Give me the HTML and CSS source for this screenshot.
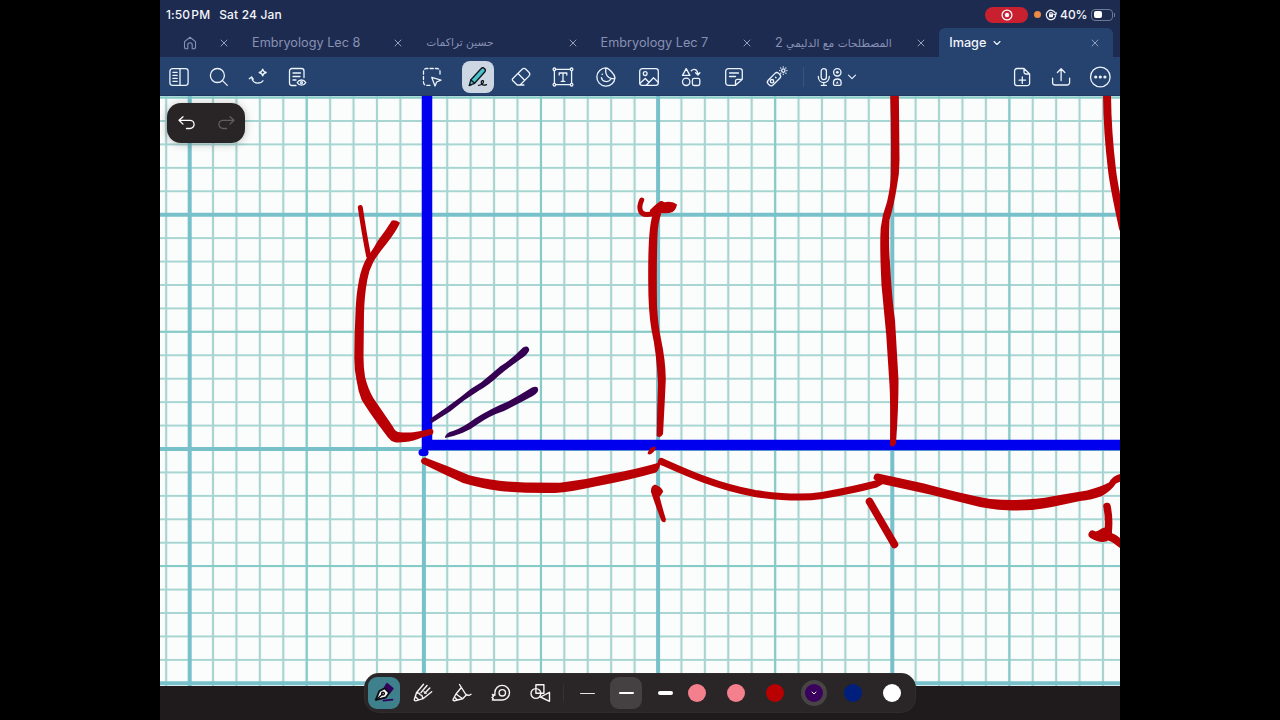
FILE: index.html
```html
<!DOCTYPE html>
<html lang="en">
<head>
    <meta charset="UTF-8">
    <title>Image</title>
    <link rel="stylesheet" href="styles.css">
</head>
<body>

<div class="screen">
    <div class="status">
        <span class="time">1:50<small> </small>PM</span>
        <span class="date">Sat 24 Jan</span>
        <span class="rec">
            <svg width="12" height="12" viewBox="0 0 12 12"><circle cx="6" cy="6" r="4.9"/><circle class="solid" cx="6" cy="6" r="2.2"/></svg>
        </span>
        <span class="mic-dot"></span>
        <svg class="lock" width="12" height="12" viewBox="0 0 12 12"><path d="M10.200 3.800A4.700 4.700 0 1 0 10.500 7.300M11.300 3.900l-.6 2.200-2-.9"/><path d="M4.700 5.600v-.8a1.300 1.300 0 0 1 2.600 0v.8"/><rect class="solid" x="4" y="5.300" width="4" height="2.900" rx=".4"/></svg>
        <span class="percent">40%</span>
        <span class="battery"><i></i></span>
    </div>

    <div class="tabs">
        <div class="home">
            <svg width="14" height="14" viewBox="0 0 14 14"><path d="M1.500 5.600 7 1.200l5.500 4.400v5.600a1.500 1.500 0 0 1-1.500 1.500H9.200V8.900a2.200 2.200 0 0 0-4.400 0v3.800H3a1.500 1.500 0 0 1-1.500-1.500z"/></svg>
            <svg class="close" width="8" height="8" viewBox="0 0 8 8"><path d="M1 1l6 6M7 1 1 7"/></svg>
        </div>
        <div class="tab">
            <span>Embryology Lec 8</span>
            <svg class="close" width="8" height="8" viewBox="0 0 8 8"><path d="M1 1l6 6M7 1 1 7"/></svg>
        </div>
        <div class="tab">
            <span class="arabic" dir="rtl" lang="ar">حسين تراكمات</span>
            <svg class="close" width="8" height="8" viewBox="0 0 8 8"><path d="M1 1l6 6M7 1 1 7"/></svg>
        </div>
        <div class="tab">
            <span>Embryology Lec 7</span>
            <svg class="close" width="8" height="8" viewBox="0 0 8 8"><path d="M1 1l6 6M7 1 1 7"/></svg>
        </div>
        <div class="tab">
            <span class="arabic" dir="rtl" lang="ar">المصطلحات مع الدليمي <b>2</b></span>
            <svg class="close" width="8" height="8" viewBox="0 0 8 8"><path d="M1 1l6 6M7 1 1 7"/></svg>
        </div>
        <div class="tab active">
            <span>Image</span>
            <svg class="down" width="8" height="6" viewBox="0 0 8 6"><path d="M1 1.500l3 3 3-3"/></svg>
            <svg class="close" width="8" height="8" viewBox="0 0 8 8"><path d="M1 1l6 6M7 1 1 7"/></svg>
        </div>
    </div>

    <div class="toolbar">
        <div class="group left">
            <svg viewBox="0 0 24 24"><rect x="2.900" y="3.700" width="18.200" height="16.600" rx="2.500"/><path d="M13 3.700v16.600M5.900 7.300h4.300M5.900 10.300h4.300M5.900 13.300h4.300M5.900 16.300h4.300"/></svg>
            <svg viewBox="0 0 24 24"><circle cx="10.400" cy="10.500" r="7"/><path d="M15.500 15.600l4.800 4.800"/></svg>
            <svg viewBox="0 0 24 24"><path d="M3.300 13.700l2.300-1.800 1.600 2.300M5.600 12c.8 4.400 3.800 6.300 6.800 6 2.100-.1 3.600-1 4.500-2.200"/><path d="M16.700 4.100c.4 2 1.200 2.900 3.500 3.400-2.300.5-3.100 1.400-3.500 3.400-.4-2-1.200-2.900-3.500-3.400 2.300-.5 3.100-1.400 3.500-3.400z"/></svg>
            <svg viewBox="0 0 24 24"><path d="M11 20.500H7a2.500 2.500 0 0 1-2.500-2.500V6A2.500 2.500 0 0 1 7 3.500h9.500A2.500 2.500 0 0 1 19 6v6.500M8 8h7.500M8 11.500h7M8 15h3"/><path d="M12.200 17.600c2.200-3.500 6.400-3.500 8.600 0-2.200 3.400-6.400 3.400-8.600 0z"/><circle cx="16.500" cy="17.600" r="1"/></svg>
        </div>

        <div class="group tools">
            <div class="cell select">
                <svg viewBox="0 0 24 24"><path stroke-dasharray="3.300 2.100" d="M10 20.300H6.500a3 3 0 0 1-3-3V6.500a3 3 0 0 1 3-3H17a3 3 0 0 1 3 3V11"/><path d="M11.800 12.400l9.200 2.700-4.300 1.900-1.700 4z"/></svg>
            </div>
            <div class="cell">
                <div class="pill">
                    <svg viewBox="0 0 24 24"><path class="teal" d="M3.300 20.500l1.600-5.800L15 3.800a2.400 2.400 0 0 1 3.700 3.200L8.600 18.300z"/><path d="M4.900 14.900l3.500 3.200M3.300 20.500l2-.8"/><path d="M12.500 20.300c2.800 0 5.300-2.200 5-4-.3-1.300-2.200-.7-2.300 1-.1 2.600 2.600 3.500 5.300 2.400"/></svg>
                </div>
            </div>
            <div class="cell">
                <svg viewBox="0 0 24 24"><path d="M3.600 13.700l9.500-9.400a2.700 2.700 0 0 1 3.800 0l3 3a2.700 2.700 0 0 1 0 3.800l-8.800 8.900H8.200l-4.600-4.500a1.500 1.500 0 0 1 0-1.800zM9 8.500l6.700 6.700M8.500 20h6.400"/></svg>
            </div>
            <div class="cell">
                <svg viewBox="0 0 24 24"><rect x="3.400" y="4.300" width="17.200" height="15.400"/><g class="knob"><circle cx="3.400" cy="4.300" r="1.300"/><circle cx="20.600" cy="4.300" r="1.300"/><circle cx="3.400" cy="19.700" r="1.300"/><circle cx="20.600" cy="19.700" r="1.300"/></g><path d="M8.200 10V8h7.600v2M12 8v8.300M10.200 16.300h3.600"/></svg>
            </div>
            <div class="cell">
                <svg viewBox="0 0 24 24"><path d="M12 2.900a9.100 9.100 0 1 0 9 10c-1.600 1.500-6 .5-7.800-2-1.800-2.400-1.700-5.800-1.200-8zM12 2.900c2.500.3 8.700 6 9 10"/><path d="M7.400 12.700c.6 4 6.500 5.400 9.300 1.700"/><circle class="solid" cx="8.300" cy="9.300" r=".8"/></svg>
            </div>
            <div class="cell">
                <svg viewBox="0 0 24 24"><rect x="2.700" y="3.700" width="18.600" height="16.600" rx="2.600"/><circle cx="8.200" cy="8.600" r="1.900"/><path d="M3 18.300l5.300-4.800 3.600 3.700M9.500 20l7-7.300 4.700 4.500"/></svg>
            </div>
            <div class="cell">
                <svg viewBox="0 0 24 24"><path d="M7.200 3.600l3.700 6.800H3.500z"/><circle cx="7.200" cy="16.800" r="3.700"/><rect x="13.400" y="13.300" width="7.400" height="7.200" rx="1.800"/><path d="M12.300 5.700c2.300-2.400 6.400-1.500 6.600 3.800M16.600 7.800l2.300 2.200 2-2.300"/></svg>
            </div>
            <div class="cell">
                <svg viewBox="0 0 24 24"><path d="M13.500 20.300H6.300a2.600 2.600 0 0 1-2.600-2.600V6.300a2.600 2.600 0 0 1 2.600-2.600h11.400a2.600 2.600 0 0 1 2.600 2.600v8zM20.300 14.300h-4.600a2 2 0 0 0-2.200 2v4M20.300 14.300l-6.800 6M7.500 8h9M7.500 11.500h6"/></svg>
            </div>
            <div class="cell">
                <svg viewBox="0 0 24 24"><rect x="1.600" y="10.800" width="14.800" height="6.800" rx="2.600" transform="rotate(-45 9 14.200)"/><circle cx="7" cy="16.200" r="1.700"/><path d="M10.500 12.200l.5.500"/><circle cx="18.300" cy="5.600" r="1.700"/><path d="M18.300 1.900v.2M18.300 9.100v.2M14.600 5.600h.2M21.800 5.600h.2M15.700 3l.1.100M20.800 8.100l.1.100M15.700 8.200l.1-.1M20.800 3.100l.1-.1"/></svg>
            </div>
            <span class="line"></span>
            <svg class="record" viewBox="0 0 28 24"><rect x="6.200" y="3.700" width="5.200" height="11" rx="2.600"/><path d="M3.300 11.500c0 8.200 11 8.200 11 0M8.800 17.700v2.600M6.300 20.400h5"/><circle cx="22.300" cy="7.300" r="3.700"/><circle class="solid" cx="22.300" cy="7.300" r="1.400"/><path d="M18.500 19v-1.500c0-4.700 7.600-4.700 7.600 0V19c0 1-.6 1.400-1.500 1.400H20c-.9 0-1.500-.4-1.500-1.400z"/><path class="solid" d="M21 18.600l1.300-2.600 1.300 2.600z"/></svg>
            <svg class="down" width="10" height="6" viewBox="0 0 10 6"><path d="M1.500 1.200l3.500 3.500 3.500-3.500"/></svg>
        </div>

        <div class="group right">
            <svg viewBox="0 0 24 24"><path d="M14 3.500H7a2.400 2.400 0 0 0-2.400 2.400v12.300A2.400 2.400 0 0 0 7 20.600h10.200a2.400 2.400 0 0 0 2.400-2.400V9zM14 3.500v3.700A1.800 1.800 0 0 0 15.800 9h3.800M12.300 12v6.400M9.100 15.200h6.400"/></svg>
            <svg viewBox="0 0 24 24"><path d="M3.600 13.200v4.300A2.500 2.500 0 0 0 6.100 20h12a2.500 2.500 0 0 0 2.500-2.500v-4.300M12.100 15.500V4M8.400 7.500l3.700-3.700 3.700 3.700"/></svg>
            <svg viewBox="0 0 24 24"><circle cx="12.300" cy="12" r="9.800"/><g class="solid"><circle cx="7.700" cy="12" r="1.600"/><circle cx="12.300" cy="12" r="1.600"/><circle cx="16.900" cy="12" r="1.600"/></g></svg>
        </div>
    </div>

    <div class="board">
        <svg class="paper" width="960" height="590" viewBox="160 96 960 590">
            <defs>
                <pattern id="small" x="189.600" y="214.700" width="23.420" height="23.430" patternUnits="userSpaceOnUse">
                    <path class="col" d="M0 0v23.430M23.420 0v23.430"/>
                    <path class="row" d="M0 0h23.420M0 23.430h23.420"/>
                </pattern>
            </defs>
            <rect class="sheet" x="160" y="96" width="960" height="590"/>
            <rect fill="url(#small)" x="160" y="96" width="960" height="590"/>
            <path class="mid" d="M306.700 96v590M541 96v590M775.200 96v590M1009.400 96v590M160 97.600h960M160 331.800h960M160 566h960"/>
            <path class="major" d="M189.700 96v590M423.900 96v590M658.100 96v590M892.300 96v590M160 214.700h960M160 449h960M160 683.300h960"/>

            <g class="ink blue">
                <path stroke-width="10.500" stroke-linecap="butt" d="M427 90v359M422 445h700"/>
                <path stroke-width="7" d="M422 452.500h3"/>
            </g>

            <g class="ink red">
                <path stroke-width="5" d="M360.300 207.500C362 219 365 238 368.600 256"/>
                <path class="fill" d="M391.700 220.700Q395 219.500 400 222.700Q397 230 386.700 243.500Q378 254 373.300 262Q369 270 367.300 280Q364.500 295 364 313L363.500 356.700Q363.500 368 365 376.700Q368 389 373.300 398L393 426.700Q395 431.200 398 431.900Q405 433 413.300 432.300Q423 431 430.500 428.800Q435 429.500 432.500 434.500L423 437Q413 441.500 405 442Q399 442.800 395 442.300Q391 441.500 388 437.500L380 426.700Q369 412 361.700 400Q358 391 356.500 380Q354.300 370 354.300 358Q354.300 335 355.500 313Q356 295 359 280Q361.500 267 366.700 258Q374 248 378 240.500Q386 230 391.700 220.700z"/>

                <path stroke-width="5" d="M641.700 200c-3.500 8-2 14.500 5 14.500 8 0 12-3 15-11"/>
                <path class="fill" d="M650 210Q658 202 661 201Q663 203 666 202Q673 201 677 204.500Q676 210 672.500 212Q668 214 661 213Q655 217 650 216z"/>
                <path class="fill" d="M653 214L661.500 213Q658 222 657.500 235Q656.500 262 657 305Q658 325 661 339Q665.500 360 665.800 379Q665 398 663 434Q660.500 439 656.700 436Q657 410 658 384Q656.500 352 651.500 330Q648 310 648.200 276Q648 226 653 214z"/>
                <path class="fill" d="M647.500 453.500Q649 448 654 446.500Q657.500 447 653.500 452Q650 456 647.500 453.500z"/>

                <path class="fill" d="M890 90H898.800L899.500 160Q899.500 174 897 186Q894 205 889.500 220Q888.500 245 889.800 260Q892 300 895 320L898.500 380Q898.500 410 896 443Q893.500 449 890 445Q890.500 400 889.500 385Q887 335 881.500 285Q879.500 245 880.700 228Q882 215 887 202Q891 185 890.800 172Q891.500 130 890 90z"/>
                <path stroke-width="8" d="M1107 90C1107 120 1109 145 1112 170C1114 187 1118 205 1123 228"/>

                <path class="fill" d="M422 463.500Q419 459 425 457.500Q448 466 470 475.500Q495 481.500 525 482.500L560 482.700Q585 480 610 474Q635 469.500 656 463.500L660 461Q661 468 656 472.500Q630 480 595 486.500Q570 492 555 493Q525 493.500 500 491Q480 488 463 483Q441 473 422 463.500z"/>
                <path stroke-width="7" d="M661.500 461.500C685 472 715 486 755 493.500C779 497 803 498.500 822 495.500C842 492 859 488.500 876 484l7-4"/>
                <path class="fill" d="M873.500 479Q873.500 473 878 473.500L924 483.500Q960 493.500 990 499Q1025 502 1054 496L1087 490.500Q1103 486 1109 482.500Q1113 475 1122 473.500V481L1116 483.500Q1111 491 1102 496Q1092 500 1080 501L1052 507Q1033 511 1012 510.500Q995 510 980 507L930 494.500L882 484z"/>

                <path class="fill" d="M651 492Q650.500 486 655 484.500Q662 487 663.200 491.500Q661 495.500 659.500 496.500Q663 510 666 519.500Q665.500 524 661.500 521Q657 510 651 492z"/>
                <path stroke-width="7.500" d="M869.500 501.500L894.500 544.500"/>
                <path stroke-width="7.500" d="M1107 506.500C1109 516 1109 525 1108 533"/>
                <path stroke-width="8" d="M1092.500 534.500C1100 539 1107 540 1108 533c-4-4-5 1-10 2M1106 536c6 0 10 4 18 10"/>
            </g>

            <g class="ink purple">
                <path class="fill" d="M431 423.500L430.500 418.500Q446 408 460 397.500Q470 388.500 481 382.500Q492 373.500 500 366.500Q512 359 523 347.500Q528.500 344.500 529.300 350Q528 354.500 520 359.500Q508 368 499 375.500Q489 385 479 390.500Q464 399.500 450 411.500z"/>
                <path class="fill" d="M445 438Q445.500 432.500 453 431Q463 427.500 475 418.500Q492 408 508 401.500Q520 395 532 387.500Q538 385 538.200 390Q538 394 528 398.500Q515 405.500 504 411Q490 415.500 478 424Q465 434 445 438z"/>
            </g>
        </svg>

        <div class="history">
            <svg width="20" height="16" viewBox="0 0 20 16"><path d="M6 1.700L2 5.300l4 3.800M2 5.300h11a4.100 4.100 0 0 1 0 8.200H9.500"/></svg>
            <svg class="off" width="20" height="16" viewBox="0 0 20 16"><path d="M14 1.700l4 3.600-4 3.800M18 5.300H7a4.100 4.100 0 0 0 0 8.200h3.500"/></svg>
        </div>

        <div class="pens">
            <div class="pen chosen">
                <svg viewBox="0 0 24 24"><path class="nib-top" d="M12.500 6.500l2.500-4 6 5-3.500 4.500z"/><path class="nib" d="M3.800 18.800l3.500-8.700 5.400-2.800 4.500 4.500-3.300 4.700z"/><path d="M4 18.700l6.500-5.500"/><circle cx="11" cy="12.600" r="1.400"/><path class="under" d="M11.500 19.600l9-1"/></svg>
            </div>
            <div class="pen">
                <svg viewBox="0 0 24 24"><path d="M12.500 3.300l-7 8.500L3.300 18.500q0 1.500 1.500 1.300L12 17.700l8.700-7M16 4.500l-6 7M13 10.800l2 1.500M18.800 7l-5 5.200M5.500 11.800l2.500.5 1.300 1.500 1.500.5L12 17.700M4.500 15.800l3 3"/></svg>
            </div>
            <div class="pen">
                <svg viewBox="0 0 24 24"><path d="M9.500 3.500L15.500 13q2.500 2.500 5.500.3M11.300 6.500L6 13l6.700 4.700 3.800-4M6 13l-3 5.500q0 1.300 1.300 1.200l8.400-2M4.300 16l3.200 3"/></svg>
            </div>
            <div class="pen">
                <svg viewBox="0 0 24 24"><path d="M3.400 19h10a7.300 7.300 0 1 0-7.500-7.300v2.600l-2.500-.8 1 2-1.400 1 1.200 1z"/><circle cx="13.300" cy="11.800" r="3.200"/></svg>
            </div>
            <div class="pen">
                <svg viewBox="0 0 24 24"><circle cx="7.900" cy="12.500" r="4.900"/><path d="M7.900 3.700h8v8.500h-8zM21.500 11.300v9L12.500 16z"/></svg>
            </div>
            <span class="line"></span>
            <div class="pen"><i class="thin"></i></div>
            <div class="pen width"><i class="medium"></i></div>
            <div class="pen"><i class="thick"></i></div>
            <div class="colors">
                <i class="pink"></i>
                <i class="pink"></i>
                <i class="crimson"></i>
                <i class="violet"><svg width="6" height="4" viewBox="0 0 6 4"><path d="M1 1l2 2 2-2"/></svg></i>
                <i class="navy"></i>
                <i class="white"></i>
            </div>
        </div>
    </div>
</div>

</body>
</html>
```
FILE: styles.css
```css
* {
    box-sizing: border-box;
}

body {
    margin: 0;
    background: #000;
    font-family: Inter, "Liberation Sans", sans-serif;
    display: flex;
    justify-content: center;
}

svg {
    display: block;
    flex: none;
    fill: none;
    stroke: currentColor;
    stroke-width: 1.3;
    stroke-linecap: round;
    stroke-linejoin: round;
}

.solid {
    fill: currentColor;
    stroke: none;
}

.screen {
    width: 960px;
    height: 720px;
    overflow: hidden;
    background: #1e2b50;
    display: flex;
    flex-direction: column;
}

/* status bar */
.status {
    height: 28px;
    padding: 1px 7px 0 6px;
    display: flex;
    align-items: center;
    color: #f3f5fa;
    font-size: 12px;
    font-weight: 500;
    white-space: nowrap;
}

.time {
    letter-spacing: 0.1px;
}

.time small {
    font-size: 4px;
}

.date {
    margin-left: 9px;
    letter-spacing: 0.15px;
}

.rec {
    width: 43px;
    height: 16px;
    margin-left: auto;
    border-radius: 8px;
    background: #c8202f;
    display: flex;
    align-items: center;
    justify-content: center;
}

.mic-dot {
    width: 7px;
    height: 7px;
    margin-left: 6px;
    border-radius: 50%;
    background: #ee8a43;
}

.lock {
    margin-left: 4px;
    stroke-width: 1.2;
}

.percent {
    width: 28px;
    margin-left: 3px;
}

.battery {
    position: relative;
    width: 22px;
    height: 12px;
    margin-left: 3px;
    padding: 1.5px;
    border: 1px solid #6f7894;
    border-radius: 4px;
}

.battery::after {
    content: "";
    position: absolute;
    right: -3px;
    top: 3px;
    width: 1px;
    height: 4px;
    background: #6f7894;
}

.battery i {
    display: block;
    width: 8px;
    height: 100%;
    border-radius: 2px;
    background: #fff;
}

/* tabs */
.tabs {
    height: 29px;
    display: flex;
    color: #8791b4;
    font-size: 12.7px;
}

.home {
    width: 82px;
    padding: 0 14px 0 23px;
    display: flex;
    align-items: center;
    justify-content: space-between;
}

.home svg {
    stroke-width: 1.1;
}

.tab {
    width: 174.300px;
    padding: 0 14px 0 10px;
    display: flex;
    align-items: center;
    white-space: nowrap;
}

.tabs .close {
    margin-left: auto;
    stroke-width: 1;
    color: #949dbc;
}

.arabic {
    font-family: "DejaVu Sans", sans-serif;
    font-size: 10.7px;
}

.arabic b {
    font-family: Inter, sans-serif;
    font-size: 12.7px;
    font-weight: 400;
}

.tab.active {
    color: #f1f4fa;
    font-weight: 500;
    background: #26426f;
    border-radius: 6px 6px 0 0;
}

.tab.active .down {
    margin-left: 7px;
    stroke-width: 1.1;
}

/* toolbar */
.toolbar {
    height: 39px;
    flex: none;
    padding-top: 1px;
    background: #26426f;
    border-bottom: 1px solid #20385f;
    color: #eaf3fb;
    display: flex;
    align-items: center;
}

.toolbar svg {
    width: 24px;
    height: 24px;
}

.group {
    display: flex;
    align-items: center;
}

.left {
    gap: 15.300px;
    padding-left: 7.300px;
}

.tools {
    margin-left: 101px;
}

.cell {
    width: 42.700px;
    display: flex;
    justify-content: center;
}

.select {
    margin-right: 3.800px;
}

.pill {
    width: 32px;
    height: 32px;
    border-radius: 8px;
    background: #cdd6e3;
    color: #10151c;
    display: flex;
    align-items: center;
    justify-content: center;
}

.teal {
    fill: #4cc0cb;
}

.knob {
    fill: #26426f;
}

.line {
    width: 1px;
    height: 20px;
    background: #3a527c;
}

.tools .line {
    margin-left: 5px;
}

.toolbar .record {
    width: 28px;
    margin-left: 11px;
}

.toolbar .down {
    width: 10px;
    height: 6px;
    margin-left: 4px;
    stroke-width: 1.1;
}

.right {
    margin-left: auto;
    gap: 15px;
    padding-right: 8px;
}

/* drawing area */
.board {
    position: relative;
    flex: 1;
    background: #1f1b1c;
}

.paper rect {
    stroke: none;
}

.sheet {
    fill: #fafdfc;
}

.col {
    stroke: #a9d3d0;
    stroke-width: 2.200;
}

.row {
    stroke: #a6d5d2;
    stroke-width: 1.900;
}

.mid {
    stroke: #86cbc8;
    stroke-width: 2;
}

.major {
    stroke: #78c1cb;
    stroke-width: 4;
}

.blue {
    stroke: #0000ee;
}

.red {
    stroke: #b90005;
}

.red .fill {
    fill: #b90005;
    stroke: none;
}

.purple .fill {
    fill: #360052;
    stroke: none;
}

.history {
    position: absolute;
    left: 7px;
    top: 7px;
    width: 78px;
    height: 40px;
    padding: 0 9px 0 10px;
    border-radius: 14px;
    background: #292425;
    box-shadow: 0 1px 8px rgba(0, 0, 0, 0.25);
    color: #fff;
    display: flex;
    align-items: center;
    justify-content: space-between;
}

.off {
    color: #625d5e;
}

.pens {
    position: absolute;
    left: 205px;
    top: 578px;
    width: 550px;
    height: 38px;
    border-radius: 14px;
    background: #2a2627;
    box-shadow: 0 0 0 1px #302c2d;
    color: #f5f3f3;
    display: flex;
    align-items: center;
}

.pen {
    width: 39px;
    height: 32px;
    display: flex;
    align-items: center;
    justify-content: center;
}

.pen svg {
    width: 24px;
    height: 24px;
    stroke-width: 1.4;
}

.chosen,
.width {
    width: 32px;
    height: 32px;
    margin: 0 3.500px;
    border-radius: 9px;
}

.chosen {
    margin-left: 3px;
    background: #3e808b;
    color: #0c0c14;
}

.width {
    background: #454142;
}

.nib {
    fill: #f4f4f6;
    stroke-width: 1.800;
}

.nib-top {
    fill: #32005c;
    stroke: #32005c;
}

.under {
    stroke: #32005c;
    stroke-width: 1.800;
}

.pens .line {
    height: 16px;
    margin: 0 4px 0 3px;
    background: #373334;
}

.thin,
.medium,
.thick {
    width: 15px;
    height: 1px;
    border-radius: 2px;
    background: #e5e3e3;
}

.medium {
    height: 2px;
    background: #fff;
}

.thick {
    height: 4px;
    background: #fff;
}

.colors {
    margin-left: 3px;
    display: flex;
    gap: 21px;
}

.colors i {
    width: 18px;
    height: 18px;
    border-radius: 50%;
    display: flex;
    align-items: center;
    justify-content: center;
}

.pink {
    background: #f4808e;
}

.crimson {
    background: #b90003;
}

.violet {
    background: #3a005d;
    box-shadow: 0 0 0 4px #484445;
}

.violet svg {
    stroke-width: 1;
}

.navy {
    background: #001f7d;
}

.white {
    background: #fff;
}
```
